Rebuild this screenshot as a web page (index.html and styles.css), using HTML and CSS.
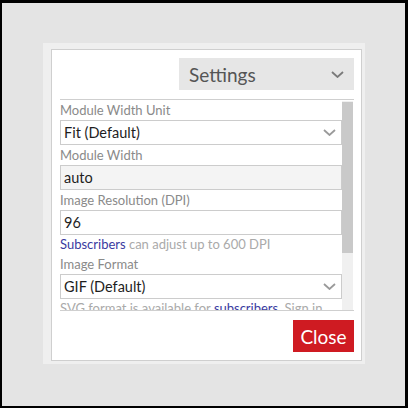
FILE: index.html
```html
<!DOCTYPE html>
<html>
<head>
<meta charset="utf-8">
<link rel="stylesheet" href="styles.css">
</head>
<body>
<div class="frame">
  <div class="backdrop">
    <div class="panel">
      <div class="dialog">
        <div class="head">
          <div class="settings">
            <span>Settings</span>
            <svg class="chev" width="13" height="7" viewBox="0 0 13 7"><path d="M1 1 L6.5 6 L12 1" fill="none" stroke="#7a7a7a" stroke-width="1.8"/></svg>
          </div>
        </div>
        <div class="scroll">
          <div class="content">
            <div class="label">Module Width Unit</div>
            <div class="field select"><span>Fit (Default)</span><svg class="chev" width="13" height="7" viewBox="0 0 13 7"><path d="M1 1 L6.5 6 L12 1" fill="none" stroke="#9a9a9a" stroke-width="1.8"/></svg></div>
            <div class="label">Module Width</div>
            <div class="field readonly">auto</div>
            <div class="label">Image Resolution (DPI)</div>
            <div class="field">96</div>
            <div class="hint"><a class="link">Subscribers</a> can adjust up to 600 DPI</div>
            <div class="label">Image Format</div>
            <div class="field select"><span>GIF (Default)</span><svg class="chev" width="13" height="7" viewBox="0 0 13 7"><path d="M1 1 L6.5 6 L12 1" fill="none" stroke="#9a9a9a" stroke-width="1.8"/></svg></div>
            <div class="hint">SVG format is available for <a class="link">subscribers</a>. Sign in</div>
          </div>
          <div class="track"><div class="thumb"></div></div>
        </div>
        <div class="foot">
          <button class="close">Close</button>
        </div>
      </div>
    </div>
  </div>
</div>
</body>
</html>
```
FILE: styles.css
```css
html, body {
  margin: 0;
  padding: 0;
  background: #000;
}
.frame {
  width: 408px;
  height: 408px;
  box-sizing: border-box;
  padding: 3px 3px 2px 2px;
}
.backdrop {
  width: 403px;
  height: 403px;
  background: #e4e4e4;
  box-sizing: border-box;
  padding: 40px 0 0 41px;
  font-family: Lato, "Open Sans", sans-serif;
}
.panel {
  width: 322px;
  height: 321px;
  box-sizing: border-box;
  background: #efefef;
  padding: 6px 3px 3px 8px;
}
.dialog {
  width: 311px;
  height: 312px;
  box-sizing: border-box;
  background: #fff;
  border: 1px solid #cfcfcf;
  padding: 8px 7px 0 8px;
  display: flex;
  flex-direction: column;
}
.head {
  display: flex;
  justify-content: flex-end;
  margin-bottom: 9px;
}
.settings {
  width: 175px;
  height: 32px;
  box-sizing: border-box;
  background: #e6e6e6;
  display: flex;
  align-items: center;
  justify-content: space-between;
  padding: 0 10px 0 10px;
  font-size: 19px;
  color: #555;
}
.chev { display: block; }
.scroll {
  height: 210px;
  border-top: 1px solid #cfcfcf;
  border-bottom: 1px solid #cfcfcf;
  display: flex;
  overflow: hidden;
}
.content {
  width: 282px;
  overflow: hidden;
}
.track {
  width: 11px;
  margin: 1px 0 0 0;
  background: #f0f0f0;
}
.thumb {
  height: 151px;
  margin-top: 1px;
  background: #c9c9c9;
}
.label {
  height: 20px;
  line-height: 20px;
  font-size: 13px;
  color: #8a8a8a;
  white-space: nowrap;
}
.field {
  width: 282px;
  height: 25px;
  box-sizing: border-box;
  border: 1px solid #cccccc;
  background: #fff;
  display: flex;
  align-items: center;
  justify-content: space-between;
  padding: 0 5px 0 3px;
  font-size: 14.5px;
  color: #1e1e1e;
}
.readonly { background: #f4f4f4; }
.hint {
  height: 19px;
  line-height: 19px;
  font-size: 13px;
  color: #aaaaaa;
  white-space: nowrap;
}
.link { color: #3a3aa0; }
.foot {
  display: flex;
  justify-content: flex-end;
  padding-top: 9px;
}
.close {
  width: 61px;
  height: 32px;
  border: 0;
  background: #cf1b22;
  color: #fff;
  font-family: Lato, "Open Sans", sans-serif;
  font-size: 19px;
  padding: 0;
}
```
